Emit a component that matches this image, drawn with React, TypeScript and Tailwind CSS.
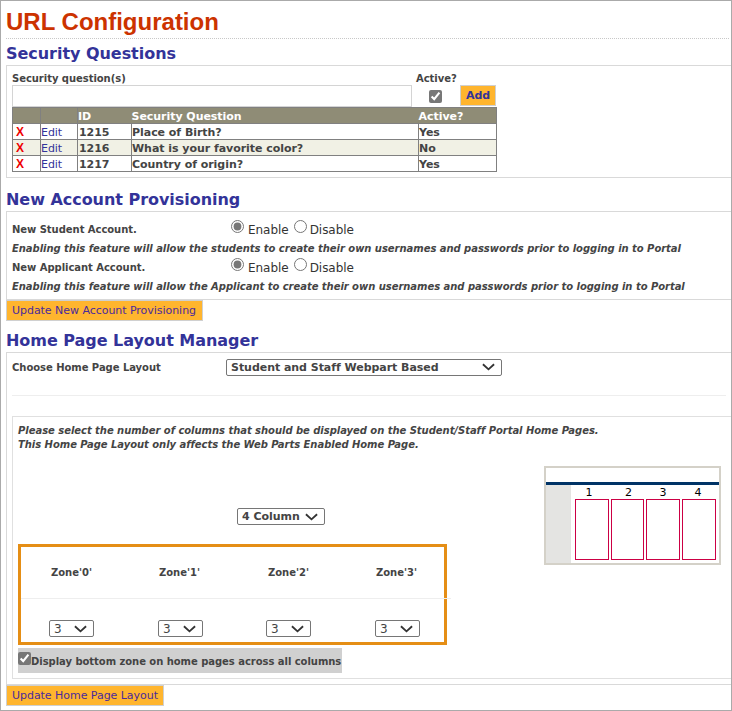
const font = { fontFamily: '"DejaVu Sans", Verdana, sans-serif', letterSpacing: '-0.04px' };

function Chevron({ className }: { className: string }) {
  return (
    <svg viewBox="0 0 14 8" className={className} fill="none" stroke="#333333" strokeWidth="2">
      <path d="M1 1l6 5.5L13 1" />
    </svg>
  );
}

function FakeSelect({ label, className }: { label: string; className: string }) {
  return (
    <div className={`flex h-[17px] items-center justify-between rounded-[2px] border border-[#767676] bg-white pl-[4px] pr-[6px] text-[11px] font-bold text-[#444444] ${className}`}>
      <span className="mt-[2px]">{label}</span>
      <Chevron className="h-[8px] w-[13px]" />
    </div>
  );
}

function SmallSelect({ className }: { className: string }) {
  return (
    <div className={`flex h-[17px] w-[45px] items-center justify-between rounded-[2px] border border-[#767676] bg-white pl-[4px] pr-[6px] text-[12px] text-[#444444] ${className}`}>
      <span>3</span>
      <Chevron className="h-[8px] w-[13px]" />
    </div>
  );
}

function OrangeButton({ label, className }: { label: string; className: string }) {
  return (
    <div className={`flex h-[21px] items-center whitespace-nowrap border border-[#d0d0d0] bg-[#ffb52e] px-[5px] pt-[2px] text-[11px] text-[#4b2a9c] ${className}`}>
      {label}
    </div>
  );
}

function Radios() {
  return (
    <div className="flex items-center text-[12px] font-normal text-[#333333]">
      <input type="radio" defaultChecked className="m-0 -mt-[7px] h-[13px] w-[13px] accent-[#777777]" />
      <span className="ml-[4px]">Enable</span>
      <input type="radio" className="m-0 -mt-[7px] ml-[5px] h-[13px] w-[13px] accent-[#777777]" />
      <span className="ml-[3px]">Disable</span>
    </div>
  );
}

const rows = [
  { id: '1215', q: 'Place of Birth?', active: 'Yes', bg: 'bg-white' },
  { id: '1216', q: 'What is your favorite color?', active: 'No', bg: 'bg-[#f1f1e5]' },
  { id: '1217', q: 'Country of origin?', active: 'Yes', bg: 'bg-white' },
];

export default function App() {
  return (
    <div style={font} className="h-[711px] w-[732px] overflow-hidden border border-[#aaaaaa] bg-white pl-[5px] text-[#444444]">
      <h1 style={{ fontFamily: '"Liberation Sans", Arial, sans-serif', letterSpacing: 0 }} className="h-[37px] pt-[6px] text-[24px] leading-[30px] font-bold text-[#cc3300]">
        URL Configuration
      </h1>
      <div className="mr-[2px] border-t border-dotted border-[#c8c8c8]" />
      <h2 className="h-[26px] pt-[5px] text-[16px] leading-[20px] font-bold text-[#333399]">Security Questions</h2>

      <div className="h-[113px] border-t border-b border-l border-[#d9d9d9] pt-[6px] pl-[5px]">
        <div className="flex">
          <div className="w-[404px]">
            <div className="h-[13px] text-[10px] leading-[14px] font-bold">Security question(s)</div>
            <div className="h-[22px] w-[400px] border border-[#d4d4d4]" />
          </div>
          <div className="w-[44px]">
            <div className="h-[13px] text-[10px] leading-[14px] font-bold">Active?</div>
            <div className="flex h-[22px] items-center justify-center pr-[5px]">
              <input type="checkbox" defaultChecked className="m-0 h-[13px] w-[13px] accent-[#777777]" />
            </div>
          </div>
          <div className="pt-[13px]">
            <div className="flex h-[21px] w-[36px] items-center justify-center border border-[#d0d0d0] bg-[#ffb52e] pt-[2px] text-[11px] font-bold text-[#333399]">Add</div>
          </div>
        </div>
        <table className="w-[484px] table-fixed border-collapse text-[11px] font-bold">
          <colgroup>
            <col className="w-[28px]" />
            <col className="w-[37px]" />
            <col className="w-[54px]" />
            <col className="w-[287px]" />
            <col className="w-[78px]" />
          </colgroup>
          <thead>
            <tr className="h-[16px] bg-[#8f8c76] text-left leading-[13px] text-white">
              <th className="border border-[#808080] p-0" />
              <th className="border border-[#808080] p-0" />
              <th className="border-y border-l border-[#808080] p-0 pt-[2px]">ID</th>
              <th className="border-y border-[#808080] p-0 pt-[2px]">Security Question</th>
              <th className="border-y border-r border-[#808080] p-0 pt-[2px]">Active?</th>
            </tr>
          </thead>
          <tbody>
            {rows.map((row) => (
              <tr key={row.id} className={`h-[16px] leading-[13px] ${row.bg}`}>
                <td style={{ fontFamily: '"Liberation Sans", Arial, sans-serif' }} className="border border-[#808080] p-0 pt-[2px] pl-[3px] text-[12px] text-[#ee0000]">X</td>
                <td className="border border-[#808080] p-0 pt-[2px] font-normal text-[#333399]">Edit</td>
                <td className="border border-[#808080] p-0 pt-[2px] pl-[1px]">{row.id}</td>
                <td className="border border-[#808080] p-0 pt-[2px]">{row.q}</td>
                <td className="border border-[#808080] p-0 pt-[2px]">{row.active}</td>
              </tr>
            ))}
          </tbody>
        </table>
      </div>

      <h2 className="h-[33px] pt-[12px] text-[16px] leading-[20px] font-bold text-[#333399]">New Account Provisioning</h2>

      <div className="h-[89px] border-y border-l border-[#d9d9d9] pt-[8px] pl-[5px] text-[10px] font-bold">
        <div className="flex h-[19px] items-center">
          <span className="w-[219px]">New Student Account.</span>
          <Radios />
        </div>
        <div className="h-[19px] leading-[19px] italic">Enabling this feature will allow the students to create their own usernames and passwords prior to logging in to Portal</div>
        <div className="flex h-[19px] items-center">
          <span className="w-[219px]">New Applicant Account.</span>
          <Radios />
        </div>
        <div className="h-[19px] leading-[19px] italic">Enabling this feature will allow the Applicant to create their own usernames and passwords prior to logging in to Portal</div>
      </div>

      <OrangeButton label="Update New Account Provisioning" className="w-[197px]" />

      <h2 className="h-[31px] pt-[10px] text-[16px] leading-[20px] font-bold text-[#333399]">Home Page Layout Manager</h2>

      <div className="h-[333px] border-y border-l border-[#d9d9d9] pt-[5px] pl-[5px]">
        <div className="flex h-[18px] items-center text-[10px] font-bold">
          <span className="w-[214px]">Choose Home Page Layout</span>
          <FakeSelect label="Student and Staff Webpart Based" className="w-[276px]" />
        </div>
        <div className="mt-[19px] mr-[5px] border-t border-[#eeeeee]" />
        <div className="mt-[20px] h-[263px] border-y border-l border-[#e0e0e0] pt-[7px] pl-[5px]">
          <p className="text-[10px] leading-[14px] font-bold italic">
            Please select the number of columns that should be displayed on the Student/Staff Portal Home Pages.
            <br />
            This Home Page Layout only affects the Web Parts Enabled Home Page.
          </p>
          <div className="flex">
            <div className="w-[526px]">
              <div className="pt-[56px] pl-[219px]">
                <FakeSelect label="4 Column" className="w-[88px]" />
              </div>
              <div className="mt-[19px] h-[101px] w-[429px] border-[3px] border-[#e58e15]">
                <div className="grid h-[52px] w-[430px] grid-cols-[repeat(4,108px)] border-b border-[#eeeeee] text-center text-[10px] font-bold">
                  <div className="flex items-center justify-center pr-[7px]">Zone'0'</div>
                  <div className="flex items-center justify-center pr-[7px]">Zone'1'</div>
                  <div className="flex items-center justify-center pr-[5px]">Zone'2'</div>
                  <div className="flex items-center justify-center pr-[5px]">Zone'3'</div>
                </div>
                <div className="flex pt-[21px] pl-[28px]">
                  <SmallSelect className="" />
                  <SmallSelect className="ml-[64px]" />
                  <SmallSelect className="ml-[63px]" />
                  <SmallSelect className="ml-[64px]" />
                </div>
              </div>
              <div className="mt-[3px] flex h-[25px] w-[324px] whitespace-nowrap bg-[#d0d0d0] text-[10px] font-bold">
                <input type="checkbox" defaultChecked className="m-0 mt-[4px] h-[13px] w-[13px] accent-[#777777]" />
                <span className="pt-[6px] leading-[15px]">Display bottom zone on home pages across all columns</span>
              </div>
            </div>
            <svg viewBox="0 0 177 99" className="mt-[14px] h-[99px] w-[177px]">
              <rect x="1" y="1" width="175" height="97" fill="#ffffff" stroke="#d4d1c8" strokeWidth="2" />
              <rect x="2" y="16" width="173" height="3" fill="#003366" />
              <rect x="2" y="19" width="25" height="78" fill="#e4e4e2" />
              <rect x="31.5" y="33.5" width="33" height="60" fill="none" stroke="#cc0044" />
              <rect x="67.5" y="33.5" width="32" height="60" fill="none" stroke="#cc0044" />
              <rect x="102.5" y="33.5" width="33" height="60" fill="none" stroke="#cc0044" />
              <rect x="138.5" y="33.5" width="33" height="60" fill="none" stroke="#cc0044" />
              <text x="45" y="30" textAnchor="middle" fontSize="11" fill="#000000" fontFamily="DejaVu Sans">1</text>
              <text x="84.5" y="30" textAnchor="middle" fontSize="11" fill="#000000" fontFamily="DejaVu Sans">2</text>
              <text x="119" y="30" textAnchor="middle" fontSize="11" fill="#000000" fontFamily="DejaVu Sans">3</text>
              <text x="154" y="30" textAnchor="middle" fontSize="11" fill="#000000" fontFamily="DejaVu Sans">4</text>
            </svg>
          </div>
        </div>
      </div>

      <OrangeButton label="Update Home Page Layout" className="w-[158px]" />
    </div>
  );
}
